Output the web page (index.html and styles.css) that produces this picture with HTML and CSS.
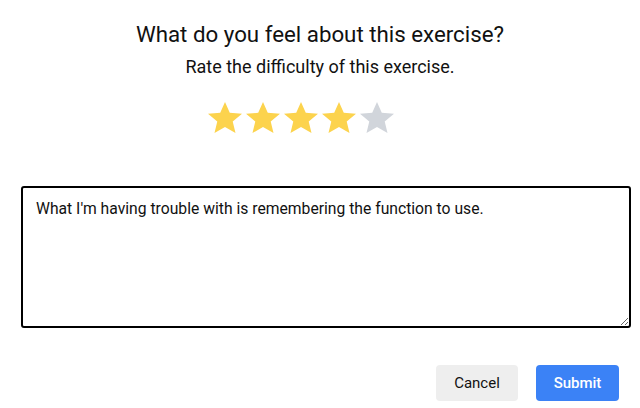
FILE: index.html
```html
<!DOCTYPE html>
<html>
<head>
<meta charset="utf-8">
<link rel="stylesheet" href="styles.css">
</head>
<body>
<div class="page">
  <h1 class="title">What do you feel about this exercise?</h1>
  <p class="subtitle">Rate the difficulty of this exercise.</p>
  <div class="stars">
    <svg class="star on" viewBox="2 2 20 19" preserveAspectRatio="none"><path d="M12 17.27L18.18 21l-1.64-7.03L22 9.24l-7.19-.61L12 2 9.19 8.63 2 9.24l5.46 4.73L5.82 21z"/></svg>
    <svg class="star on" viewBox="2 2 20 19" preserveAspectRatio="none"><path d="M12 17.27L18.18 21l-1.64-7.03L22 9.24l-7.19-.61L12 2 9.19 8.63 2 9.24l5.46 4.73L5.82 21z"/></svg>
    <svg class="star on" viewBox="2 2 20 19" preserveAspectRatio="none"><path d="M12 17.27L18.18 21l-1.64-7.03L22 9.24l-7.19-.61L12 2 9.19 8.63 2 9.24l5.46 4.73L5.82 21z"/></svg>
    <svg class="star on" viewBox="2 2 20 19" preserveAspectRatio="none"><path d="M12 17.27L18.18 21l-1.64-7.03L22 9.24l-7.19-.61L12 2 9.19 8.63 2 9.24l5.46 4.73L5.82 21z"/></svg>
    <svg class="star off" viewBox="2 2 20 19" preserveAspectRatio="none"><path d="M12 17.27L18.18 21l-1.64-7.03L22 9.24l-7.19-.61L12 2 9.19 8.63 2 9.24l5.46 4.73L5.82 21z"/></svg>
  </div>
  <textarea class="feedback" id="feedback" autofocus>What I'm having trouble with is remembering the function to use.</textarea>
  <div class="actions">
    <button class="btn cancel">Cancel</button>
    <button class="btn submit">Submit</button>
  </div>
</div>
<script src="main.js"></script>
</body>
</html>
```
FILE: styles.css
```css
html, body {
  margin: 0;
  padding: 0;
  background: #ffffff;
}
.page {
  font-family: Roboto, "Liberation Sans", sans-serif;
  color: #111111;
  padding: 19px 0 0 0;
  display: flex;
  flex-direction: column;
}
.title {
  margin: 0;
  font-size: 22.3px;
  font-weight: 400;
  line-height: 30px;
  text-align: center;
}
.subtitle {
  margin: 6px 0 0;
  font-size: 18px;
  line-height: 24px;
  text-align: center;
}
.stars {
  display: flex;
  justify-content: center;
  gap: 4px;
  margin: 23px 0 0;
  padding-right: 38px;
  height: 31px;
  align-items: center;
}
.star {
  width: 34px;
  height: 31px;
}
.star.on { fill: #fcd34d; }
.star.off { fill: #d1d5db; }
.feedback {
  margin: 53px 9px 0 21px;
  height: 142px;
  box-sizing: border-box;
  border: 2px solid #000000;
  border-radius: 3px;
  padding: 11px 13px;
  font-family: Roboto, "Liberation Sans", sans-serif;
  font-size: 15.7px;
  line-height: 20px;
  color: #111111;
  caret-color: #000000;
  resize: both;
  outline: none;
}
.actions {
  display: flex;
  justify-content: flex-end;
  gap: 18px;
  margin-top: 37px;
  padding-right: 21px;
}
.btn {
  height: 36px;
  border: none;
  border-radius: 4px;
  font-family: Roboto, "Liberation Sans", sans-serif;
  font-size: 15px;
}
.cancel {
  width: 82px;
  background: #eeeeee;
  color: #111111;
}
.submit {
  width: 83px;
  background: #3b82f6;
  color: #ffffff;
  font-weight: 500;
}
```
FILE: main.js
```js
var ta = document.getElementById('feedback');
ta.focus();
var n = ta.value.length;
ta.setSelectionRange(n, n);
```
